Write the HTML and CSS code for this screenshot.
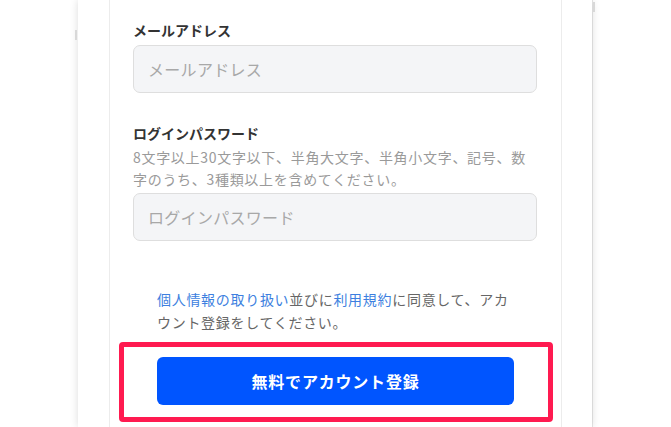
FILE: index.html
```html
<!DOCTYPE html>
<html lang="ja">
<head>
<meta charset="utf-8">
<link rel="stylesheet" href="styles.css">
</head>
<body>
<div class="device">
  <div class="panel">
    <div class="field">
      <label class="label">メールアドレス</label>
      <div class="input">メールアドレス</div>
    </div>
    <div class="field field-pw">
      <label class="label">ログインパスワード</label>
      <p class="help">8文字以上30文字以下、半角大文字、半角小文字、記号、数字のうち、3種類以上を含めてください。</p>
      <div class="input">ログインパスワード</div>
    </div>
    <p class="consent"><span class="link">個人情報の取り扱い</span>並びに<span class="link">利用規約</span>に同意して、アカウント登録をしてください。</p>
    <div class="highlight">
      <button class="submit">無料でアカウント登録</button>
    </div>
  </div>
</div>
</body>
</html>
```
FILE: styles.css
```css
html, body {
  margin: 0;
  padding: 0;
  background: #fff;
  overflow: hidden;
  height: 427px;
}
body {
  font-family: "Noto Sans CJK JP", "Noto Sans", sans-serif;
  color: #333;
}
.device {
  position: relative;
  margin-left: 78px;
  width: 453px;
  height: 427px;
  padding: 0 30px 0 31px;
  background: #fff;
  box-shadow: 0 0 8px rgba(0,0,0,0.14), 1px 0 0 #e8e8e8;
}
.device::before {
  content: "";
  position: absolute;
  left: -3px;
  top: 30px;
  width: 2px;
  height: 10px;
  background: #d8d8d8;
}
.device::after {
  content: "";
  position: absolute;
  right: -3px;
  top: 2px;
  width: 2px;
  height: 10px;
  background: #d8d8d8;
}
.panel {
  box-sizing: border-box;
  width: 453px;
  height: 100%;
  border-left: 1px solid #ececec;
  border-right: 1px solid #ececec;
  padding: 20px 24px 0 23px;
}
.field {
  display: flex;
  flex-direction: column;
}
.field-pw {
  margin-top: 30px;
}
.label {
  font-size: 14px;
  line-height: 20px;
  font-weight: 700;
  color: #333;
}
.help {
  margin: 3px 0 0;
  font-size: 14px;
  line-height: 22px;
  letter-spacing: 0.7px;
  color: #9a9a9a;
}
.input {
  box-sizing: border-box;
  margin-top: 5px;
  height: 48px;
  border: 1px solid #dedede;
  border-radius: 7px;
  background: #f4f5f7;
  padding: 0 14px;
  display: flex;
  align-items: center;
  font-size: 16px;
  letter-spacing: 0.3px;
  color: #a8a8a8;
}
.field-pw .input {
  margin-top: 3px;
}
.consent {
  margin: 47px 23px 0 24px;
  font-size: 14px;
  line-height: 23px;
  letter-spacing: 0.7px;
  color: #666;
}
.link {
  color: #3d7fe0;
}
.highlight {
  margin: 8px -16px 0 -14px;
  height: 80px;
  box-sizing: border-box;
  border: 5px solid #ff1a50;
  border-radius: 4px;
  padding: 10px 34px 0 33px;
}
.submit {
  display: block;
  width: 100%;
  height: 48px;
  border: none;
  border-radius: 6px;
  background: #0055ff;
  color: #fff;
  font-family: "Noto Sans CJK JP", "Noto Sans", sans-serif;
  font-size: 16px;
  font-weight: 700;
  letter-spacing: 0.8px;
}
```
